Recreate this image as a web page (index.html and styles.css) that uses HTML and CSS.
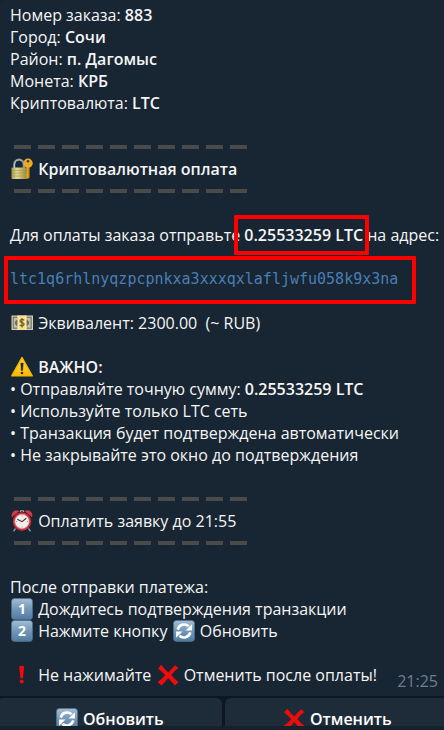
FILE: index.html
```html
<!DOCTYPE html>
<html lang="ru">
<head>
  <meta charset="UTF-8" />
  <title>Оплата заказа</title>
  <meta name="viewport" content="width=device-width, initial-scale=1.0" />
  <link rel="stylesheet" href="styles.css">
</head>
<body>

  <!-- Shared icons -->
  <svg class="sprite" aria-hidden="true">
    <defs>
      <linearGradient id="blue" x1="0" y1="0" x2="0" y2="1">
        <stop offset="0" stop-color="#a3bed4" />
        <stop offset="0.5" stop-color="#7297b8" />
        <stop offset="1" stop-color="#527ba2" />
      </linearGradient>
      <linearGradient id="brass" x1="0" y1="0" x2="1" y2="0">
        <stop offset="0" stop-color="#a99a4c" />
        <stop offset="0.35" stop-color="#e0d891" />
        <stop offset="1" stop-color="#9c8a38" />
      </linearGradient>
      <linearGradient id="amber" x1="0" y1="0" x2="0" y2="1">
        <stop offset="0" stop-color="#ffe04a" />
        <stop offset="1" stop-color="#f9b800" />
      </linearGradient>
    </defs>
    <symbol id="refresh" viewBox="0 0 22 22">
      <rect x="0.5" y="0.5" width="21" height="21" rx="3" fill="url(#blue)" stroke="#4e7294" stroke-width="0.6" />
      <path d="M4.7 9.6A6.6 6.6 0 0 1 15.6 6.3M17.3 12.4A6.6 6.6 0 0 1 6.4 15.7" fill="none" stroke="#fff" stroke-width="2.6" />
      <path d="M18.9 4.2v6.2h-6.4zM3.1 17.8v-6.2h6.4z" fill="#fff" />
    </symbol>
    <symbol id="cross" viewBox="0 0 22 22">
      <path d="M4.2 0.8Q8 6 11.4 8.5Q14.5 4.5 18.2 1.2L21.4 4.1Q17 7.3 14.2 11Q17.5 15 21.5 18L18 21.4Q14 17 11.2 14Q8.5 17.5 4.5 21.5L0.6 18Q5 15 8.2 11.2Q5 7.5 1 4.5z" fill="#f00c0c" />
    </symbol>
  </svg>

  <main class="message">
    <p>Номер заказа: <b>883</b></p>
    <p>Город: <b>Сочи</b></p>
    <p>Район: <b>п. Дагомыс</b></p>
    <p>Монета: <b>КРБ</b></p>
    <p>Криптовалюта: <b>LTC</b></p>

    <div class="block">
      <div class="dashes"></div>
      <p>
        <svg class="emoji" viewBox="0 0 22 22" aria-hidden="true">
          <path d="M3.2 11V6.5a4.8 5 0 0 1 9.6 0V11" fill="none" stroke="#8295a3" stroke-width="2.2" />
          <path d="M3.5 10V6.5a4.5 4.8 0 0 1 7-3.8" fill="none" stroke="#c5d0d6" stroke-width="0.8" />
          <rect x="0.5" y="9.5" width="15.5" height="11.5" rx="1" fill="url(#brass)" />
          <path d="M1 12.5h15M1 15.2h15M1 18h15" stroke="#877a35" stroke-opacity="0.35" />
          <path d="M15.8 8.5h2.6v10.8l-1.3 1.7-2.3-1.5 1-1.2-1.2-1.2 1.2-1.2z" fill="#e6a31f" />
          <circle cx="17" cy="5.2" r="4.7" fill="#edaa27" />
          <circle cx="17" cy="3.2" r="1.3" fill="#3d3b35" />
          <path d="M17.9 9.5v10" stroke="#b87812" stroke-width="0.8" />
        </svg>
        <b>Криптовалютная оплата</b>
      </p>
      <div class="dashes"></div>
    </div>

    <p class="block">Для оплаты заказа отправьте <b class="mark mark-amount">0.25533259 LTC</b> на адрес:</p>

    <p class="block"><code class="mark mark-address">ltc1q6rhlnyqzpcpnkxa3xxxqxlafljwfu058k9x3na</code></p>

    <p class="block">
      <svg class="emoji" viewBox="0 0 22 22" aria-hidden="true">
        <rect x="1" y="4" width="20.5" height="13.5" fill="#98947f" stroke="#d5d1b8" />
        <rect x="2.5" y="5.5" width="17.5" height="10.5" fill="#c3beaa" stroke="#77735f" stroke-width="0.7" />
        <ellipse cx="11" cy="10.8" rx="7.2" ry="4.4" fill="#6e6c5d" />
        <rect x="7" y="3.5" width="8" height="14.5" fill="#f3e18d" />
        <path d="M7 3.5v14.5M15 3.5v14.5" stroke="#fff5bd" />
        <path d="M13.3 8.3Q11 6.5 9.3 8.2Q8.5 10 11 10.6Q13.8 11.3 12.8 13Q11 14.7 8.8 13M11 6v9.5" fill="none" stroke="#725d24" stroke-width="1.2" />
      </svg>
      Эквивалент: 2300.00 &nbsp;(~ RUB)
    </p>

    <div class="block">
      <p>
        <svg class="emoji" viewBox="0 0 22 22" aria-hidden="true">
          <path d="M11 1.6L21.2 19.8H0.8z" fill="url(#amber)" stroke="#f5b800" stroke-width="1.5" stroke-linejoin="round" />
          <path d="M9.8 7h2.4l-0.5 7.4h-1.4z" fill="#2b2a25" stroke="#2b2a25" stroke-width="0.5" stroke-linejoin="round" />
          <circle cx="11" cy="17" r="1.3" fill="#2b2a25" />
        </svg>
        <b>ВАЖНО:</b>
      </p>
      <p>• Отправляйте точную сумму: <b>0.25533259 LTC</b></p>
      <p>• Используйте только LTC сеть</p>
      <p>• Транзакция будет подтверждена автоматически</p>
      <p>• Не закрывайте это окно до подтверждения</p>
    </div>

    <div class="block">
      <div class="dashes"></div>
      <p>
        <svg class="emoji" viewBox="0 0 22 22" aria-hidden="true">
          <path d="M4.5 18.5L2.5 21.3M17.5 18.5l2 2.8" stroke="#8a9096" stroke-width="1.5" />
          <path d="M1 7.3A5 5 0 0 1 8.3 1.2zM21 7.3A5 5 0 0 0 13.7 1.2z" fill="#d63845" />
          <path d="M9.3 2V0.8h3.4V2" fill="none" stroke="#b9b9bd" />
          <circle cx="11" cy="11.5" r="9.2" fill="#c9303d" />
          <circle cx="11" cy="11.5" r="7.2" fill="#f3eeea" stroke="#ef8a8e" stroke-width="0.7" />
          <path d="M11 5.5v1M11 16.5v1M5 11.5h1M16 11.5h1" stroke="#8a8585" stroke-width="0.8" />
          <path d="M6.3 9.2L11 11.7l4.3-3.5" fill="none" stroke="#33373b" stroke-width="1.1" />
        </svg>
        Оплатить заявку до 21:55
      </p>
      <div class="dashes"></div>
    </div>

    <div class="block">
      <p>После отправки платежа:</p>
      <p>
        <svg class="emoji" viewBox="0 0 22 22" aria-hidden="true">
          <rect x="0.5" y="0.5" width="21" height="21" rx="3" fill="url(#blue)" stroke="#4e7294" stroke-width="0.6" />
          <text class="keycap" x="11" y="16" text-anchor="middle">1</text>
        </svg>
        Дождитесь подтверждения транзакции
      </p>
      <p>
        <svg class="emoji" viewBox="0 0 22 22" aria-hidden="true">
          <rect x="0.5" y="0.5" width="21" height="21" rx="3" fill="url(#blue)" stroke="#4e7294" stroke-width="0.6" />
          <text class="keycap" x="11" y="16" text-anchor="middle">2</text>
        </svg>
        Нажмите кнопку
        <svg class="emoji" aria-hidden="true"><use href="#refresh" /></svg>
        Обновить
      </p>
    </div>

    <div class="block last-row">
      <p>
        <svg class="emoji" viewBox="0 0 22 22" aria-hidden="true">
          <path d="M8.2 2.2Q10.7 1.2 13.2 2.2L12 14.2H9.4z" fill="#ee0b0b" />
          <circle cx="10.7" cy="17.6" r="2" fill="#ee0b0b" />
        </svg>
        Не нажимайте
        <svg class="emoji" aria-hidden="true"><use href="#cross" /></svg>
        Отменить после оплаты!
      </p>
      <time>21:25</time>
    </div>
  </main>

  <div class="keyboard">
    <button type="button">
      <svg class="emoji" aria-hidden="true"><use href="#refresh" /></svg>
      Обновить
    </button>
    <button type="button">
      <svg class="emoji" aria-hidden="true"><use href="#cross" /></svg>
      Отменить
    </button>
  </div>

</body>
</html>
```

FILE: styles.css
```css
body {
  margin: 0;
  overflow-x: hidden;
  background: #17212b;
  color: #f5f5f5;
  font-family: "Open Sans", "Noto Sans", sans-serif;
  font-size: 16px;
  line-height: 22px;
}
p {
  margin: 0;
  white-space: nowrap;
}
b {
  font-weight: 600;
}
.sprite {
  position: absolute;
  width: 0;
  height: 0;
}
.message {
  padding: 4px 6px 10px 10px;
  background: #182533;
  border-radius: 4px 0 0 0;
}
.block {
  margin-top: 22px;
}
.emoji {
  width: 22px;
  height: 22px;
  margin: 0 1px;
  vertical-align: top;
}
.keycap {
  fill: #fff;
  font-size: 14px;
  font-weight: 700;
}

/* Row of ten dashes */
.dashes {
  width: 240px;
  height: 4px;
  padding: 9px 0;
  margin-left: 4px;
  background: repeating-linear-gradient(to right, #4a4a4a 0 17px, transparent 17px 24px) content-box;
}

code {
  color: #4a7fb5;
  font-family: "DejaVu Sans Mono", monospace;
  font-size: 15px;
  vertical-align: top;
}

/* Red frames around the amount and the address */
.mark {
  position: relative;
}
.mark::after {
  content: "";
  position: absolute;
  border: 4px solid #f00;
  border-radius: 1px;
}
.mark-amount::after {
  inset: -9px -6px -9px -10px;
}
.mark-address::after {
  inset: -14px -18px -16px -6px;
}

.last-row {
  display: flex;
  justify-content: space-between;
}
.last-row time {
  color: #6d7f8f;
  margin: 6px 0 -6px;
}

/* The buttons run a little past both sides of the window */
.keyboard {
  display: flex;
  gap: 3px;
  height: 28px;
  margin: 0 -5px 0 -3px;
  padding-top: 2px;
  overflow: hidden;
  background: #0e1621;
}
.keyboard button {
  flex: 1;
  height: 42px;
  padding: 0;
  border: 0;
  border-radius: 6px;
  background: #1e2c3a;
  color: #fff;
  font: inherit;
  font-weight: 600;
  cursor: pointer;
}
```
